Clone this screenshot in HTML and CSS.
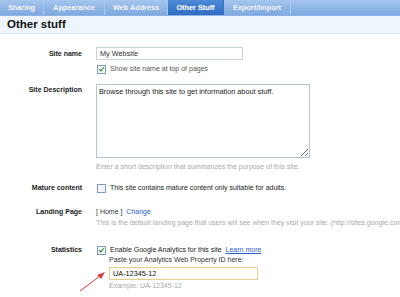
FILE: index.html
```html
<!DOCTYPE html>
<html lang="en">
<head>
  <meta charset="UTF-8">
  <title>Other stuff</title>
  <link rel="stylesheet" href="styles.css">
</head>
<body>
  <div class="tabs">
    <div class="tab t1">Sharing</div>
    <div class="tab t2">Appearance</div>
    <div class="tab t3">Web Address</div>
    <div class="tab t4 active">Other Stuff</div>
    <div class="tab t5">Export/Import</div>
  </div>
  <div class="heading">Other stuff</div>

  <div class="form">
    <div class="row r-name">
      <div class="label">Site name</div>
      <div class="field">
        <input class="text name" type="text" value="My Website" spellcheck="false">
        <label class="check"><span class="box on"></span>Show site name at top of pages</label>
      </div>
    </div>

    <div class="row r-desc">
      <div class="label">Site Description</div>
      <div class="field">
        <textarea class="desc" spellcheck="false">Browse through this site to get information about stuff.</textarea>
        <div class="help">Enter a short description that summarizes the purpose of this site.</div>
      </div>
    </div>

    <div class="row r-mature">
      <div class="label">Mature content</div>
      <div class="field">
        <label class="check dark"><span class="box"></span>This site contains mature content only suitable for adults.</label>
      </div>
    </div>

    <div class="row r-landing">
      <div class="label">Landing Page</div>
      <div class="field">
        <div class="line">[ Home ] &nbsp;<a href="#">Change</a></div>
        <div class="help clip">This is the default landing page that users will see when they visit your site: (http://sites.google.com/</div>
      </div>
    </div>

    <div class="row r-stats">
      <div class="label">Statistics</div>
      <div class="field">
        <label class="check dark"><span class="box on"></span>Enable Google Analytics for this site &nbsp;<a href="#">Learn more</a></label>
        <div class="sub">
          <div class="line">Paste your Analytics Web Property ID here:</div>
          <input class="text ua" type="text" value="UA-12345-12" spellcheck="false">
          <div class="help">Example: UA-12345-12</div>
        </div>
      </div>
    </div>
  </div>

  <svg class="arrow" width="40" height="30" viewBox="0 0 40 30">
    <line x1="2" y1="27" x2="22" y2="12" stroke="#e03a3a" stroke-width="1"/>
    <path d="M27 8 L19 11 L23 15 Z" fill="#e03a3a"/>
  </svg>
</body>
</html>
```

FILE: styles.css
```css
body { margin: 0; font-family: "Liberation Sans", Arial, sans-serif; font-size: 7px; color: #222; background: #fff; position: relative; width: 400px; height: 297px; overflow: hidden; }

.tabs { display: flex; height: 15px; background: linear-gradient(#a6c6ee, #7fa9e0); border-bottom: 1px solid #8fb3e4; }
.tab { color: #fff; font-weight: bold; font-size: 7.3px; line-height: 15px; text-align: center; border-right: 1px solid #a9c8ef; text-shadow: 0 0 1px #6d98d2; }
.t1 { width: 43px; }
.t2 { width: 60px; }
.t3 { width: 62px; }
.t4 { width: 55px; }
.t5 { width: 66px; }
.tab.active { background: linear-gradient(#4d8ad8, #2f6cc4); border-right-color: #3a72c4; }

.heading { background: #eef5fd; border-bottom: 1px solid #d8e5f5; height: 17px; line-height: 17px; padding-left: 7px; font-size: 11.5px; font-weight: bold; color: #111; }

.form { padding-top: 13px; }
.row { display: grid; grid-template-columns: 82px 1fr; column-gap: 14px; }
.label { text-align: right; font-weight: bold; color: #222; }
.field { display: flex; flex-direction: column; align-items: flex-start; min-width: 0; }

.text { font: inherit; font-size: 7.3px; box-sizing: border-box; border: 1px solid #c9d3df; padding: 0 3px; margin: 0; height: 13px; color: #333; outline: none; }
.name { width: 147px; }
.r-name .label { line-height: 14px; }

.check { display: flex; align-items: center; color: #555; line-height: 10px; }
.check.dark { color: #222; }
.box { box-sizing: border-box; width: 9px; height: 9px; border: 1px solid #7f9db9; background: #f4f6f8; margin: 0 4px 0 1px; position: relative; flex: none; }
.box.on::after { content: ""; position: absolute; left: 2px; top: 0; width: 2px; height: 4px; border: solid #2a8a2a; border-width: 0 1.5px 1.5px 0; transform: rotate(40deg); }
.r-name .check { margin-top: 4px; }

.r-desc { margin-top: 10px; }
.r-desc .label { padding-top: 2px; }
.desc { font: inherit; font-size: 7.3px; width: 214px; height: 74px; box-sizing: border-box; border: 1px solid #b4c3d8; padding: 2px 2px; margin: 0; resize: both; color: #222; }
.help { color: #aaa; margin-top: 4px; white-space: nowrap; line-height: 10px; }
.help.clip { max-width: 100%; overflow: hidden; }

.r-mature { margin-top: 11px; line-height: 10px; }

.r-landing { margin-top: 14px; line-height: 10px; }
.r-landing .help { margin-top: 1px; }
.line { line-height: 10px; color: #333; }
a { color: #2a62c9; text-decoration: underline; }
.r-landing a { text-decoration: none; }

.r-stats { margin-top: 17px; line-height: 10px; }
.sub { padding-left: 13px; display: flex; flex-direction: column; align-items: flex-start; }
.ua { width: 149px; height: 13px; border: 1px solid #e4cd8f; margin-top: 2px; color: #111; }
.r-stats .help { margin-top: 1px; }

.arrow { position: absolute; left: 78px; top: 264px; }
```
